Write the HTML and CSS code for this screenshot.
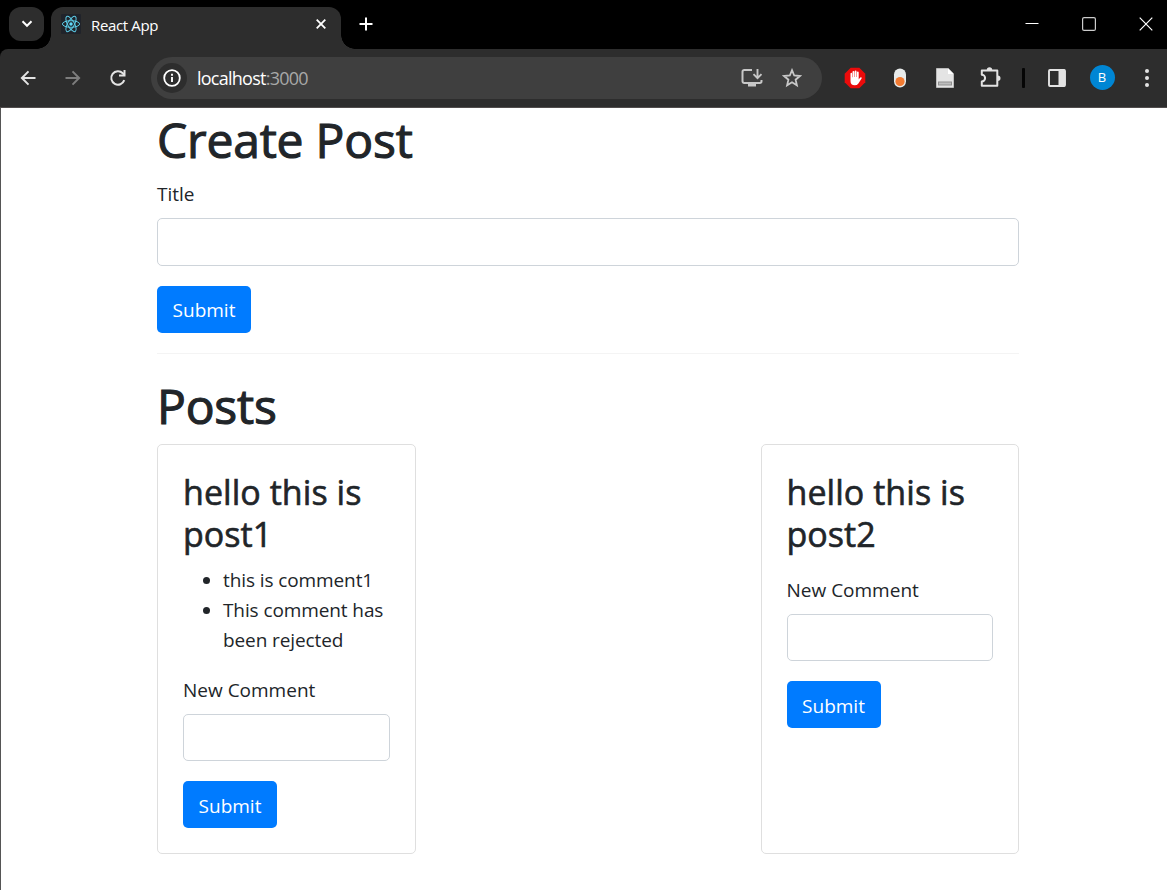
FILE: index.html
```html
<!DOCTYPE html>
<html lang="en">
<head>
<meta charset="utf-8">
<title>React App</title>
<link rel="stylesheet" href="styles.css">
</head>
<body>
<div class="browser">
  <header class="tabstrip">
    <div class="tab-search"><svg width="12" height="12" viewBox="0 0 12 12"><path d="M1.500 3.300 6 7.800l4.500-4.500" fill="none" stroke="#fff" stroke-width="2"/></svg></div>
    <div class="tab">
      <svg class="favicon" width="20" height="20" viewBox="0 0 20 20"><rect width="20" height="20" rx="1" fill="#20232a"/><g fill="none" stroke="#5ccbe6" stroke-width="1"><ellipse cx="10" cy="10" rx="8.600" ry="3.300"/><ellipse cx="10" cy="10" rx="8.600" ry="3.300" transform="rotate(60 10 10)"/><ellipse cx="10" cy="10" rx="8.600" ry="3.300" transform="rotate(120 10 10)"/></g><circle cx="10" cy="10" r="1.700" fill="#61dafb"/></svg>
      <span class="tab-title">React App</span>
      <svg class="tab-close" width="10" height="10" viewBox="0 0 10 10"><path d="m.7.7 8.600 8.600m0-8.600L.7 9.300" stroke="#fff" stroke-width="1.800"/></svg>
    </div>
    <svg class="new-tab" width="14" height="14" viewBox="0 0 14 14"><path d="M7 .5v13M.5 7h13" stroke="#fff" stroke-width="2"/></svg>
    <div class="window-controls">
      <svg width="14" height="14" viewBox="0 0 14 14"><path d="M.5 6.500h13" stroke="#fff"/></svg>
      <svg width="14" height="14" viewBox="0 0 14 14"><rect x=".6" y=".6" width="12.800" height="12.800" rx="1.500" fill="none" stroke="#ccc" stroke-width="1.200"/></svg>
      <svg width="14" height="14" viewBox="0 0 14 14"><path d="m.7.700 12.600 12.600m0-12.600L.7 13.300" stroke="#fff" stroke-width="1.200"/></svg>
    </div>
  </header>
  <nav class="toolbar">
    <div class="cell"><svg width="20" height="20" viewBox="0 0 20 20"><path d="M17.500 10H4m6.500-6.600L3.900 10l6.600 6.600" fill="none" stroke="#e3e3e3" stroke-width="2"/></svg></div>
    <div class="cell"><svg width="20" height="20" viewBox="0 0 20 20"><path d="M2.500 10H16M9.500 3.400 16.100 10l-6.600 6.600" fill="none" stroke="#7d7d7d" stroke-width="2"/></svg></div>
    <div class="cell"><svg width="20" height="20" viewBox="0 0 20 20"><path d="M16.300 12.200A6.700 6.700 0 1 1 14.800 5.300L16.500 7" fill="none" stroke="#e3e3e3" stroke-width="2"/><path d="M17.500 2v6.500H11v-2h4.500V2z" fill="#e3e3e3"/></svg></div>
    <div class="omnibox">
      <div class="site-info"><svg width="18" height="18" viewBox="0 0 18 18"><circle cx="9" cy="9" r="7.800" fill="none" stroke="#fff" stroke-width="1.800"/><path d="M9 8v5M9 4.800v1.900" stroke="#fff" stroke-width="1.900"/></svg></div>
      <span class="url">localhost<span class="port">:3000</span></span>
      <svg class="install" width="22" height="20" viewBox="0 0 22 20"><path d="M11 2H3.200A1.700 1.700 0 0 0 1.500 3.700v9.600A1.700 1.700 0 0 0 3.200 15h15.600a1.700 1.700 0 0 0 1.700-1.700V12" fill="none" stroke="#c7c7c7" stroke-width="2"/><path d="M7 15h8v3.500H7z" fill="#c7c7c7"/><path d="M16.500 1v9m-4-3.800 4 4 4-4" fill="none" stroke="#c7c7c7" stroke-width="1.900"/></svg>
      <svg width="20" height="20" viewBox="0 0 20 20"><path d="m10 2.200 2.200 5.300 5.700.5-4.300 3.700 1.300 5.600L10 14.300l-4.900 3 1.300-5.600L2.100 8l5.700-.5z" fill="none" stroke="#c7c7c7" stroke-width="1.800"/></svg>
    </div>
    <div class="cell"><svg width="22" height="22" viewBox="0 0 22 22"><path d="M6.700.8h8.600l6 6v8.400l-6 6H6.700l-6-6V6.800z" fill="#eb0b0b"/><path d="M6.500 10.500V6.700q0-.9.800-.9t.8.900v3.500h.4V5q0-.9.900-.9t.9.900v5h.4V4.300q0-.9.900-.9t.9.900V10h.4V5.500q0-.9.900-.9t.9.900v7l1.300-1.700q.8-.8 1.600-.2.300.3 0 .8l-3.200 5q-1.300 1.900-3.700 1.900-4.200 0-4.200-4.300z" fill="#fff"/></svg></div>
    <div class="cell"><svg width="14" height="20" viewBox="0 0 14 20"><rect x="1" y=".5" width="12" height="19" rx="6" fill="#e8ebeb"/><circle cx="7" cy="13.500" r="4.600" fill="#f37b32"/></svg></div>
    <div class="cell"><svg width="18" height="20" viewBox="0 0 18 20"><path d="M.5.500h11.700l5.300 5.300v13.700H.5z" fill="#e4e4e4" stroke="#bbb"/><path d="M12 .5v5.500h5.500z" fill="#fff"/><rect x="2.500" y="14" width="13" height="3" fill="#bdbdbd" stroke="#8f8f8f"/></svg></div>
    <div class="cell"><svg width="22" height="22" viewBox="0 0 22 22"><path d="M2.800 3.500H18.300V18.700H2.800v-4.300a3.300 3.300 0 0 0 0-6.600z" fill="none" stroke="#e3e3e3" stroke-width="2" stroke-linejoin="round"/><path d="M7.800 3a2.700 2.700 0 0 1 5.400 0zM18.800 8.500a2.700 2.700 0 0 1 0 5.400z" fill="#e3e3e3"/></svg></div>
    <div class="divider"></div>
    <div class="cell"><svg width="20" height="20" viewBox="0 0 20 20"><rect x="2" y="2" width="16" height="16" rx="1" fill="none" stroke="#e3e3e3" stroke-width="1.900"/><path d="M11.500 1.500H18v17h-6.500z" fill="#e3e3e3"/></svg></div>
    <div class="cell"><span class="avatar">B</span></div>
    <div class="cell"><svg width="4" height="20" viewBox="0 0 4 20"><g fill="#e3e3e3"><circle cx="2" cy="3" r="2"/><circle cx="2" cy="10" r="2"/><circle cx="2" cy="17" r="2"/></g></svg></div>
  </nav>
  <main class="page">
    <div class="container">
      <h1>Create Post</h1>
      <form>
        <div class="form-group"><label>Title</label><input class="form-control"></div>
        <button class="btn" type="button">Submit</button>
      </form>
      <hr>
      <h1>Posts</h1>
      <div class="posts">
        <article class="card">
          <h3>hello this is post1</h3>
          <ul><li>this is comment1</li><li>This comment has been rejected</li></ul>
          <form>
            <div class="form-group"><label>New Comment</label><input class="form-control"></div>
            <button class="btn" type="button">Submit</button>
          </form>
        </article>
        <article class="card">
          <h3>hello this is post2</h3>
          <ul></ul>
          <form>
            <div class="form-group"><label>New Comment</label><input class="form-control"></div>
            <button class="btn" type="button">Submit</button>
          </form>
        </article>
      </div>
    </div>
  </main>
</div>
</body>
</html>
```
FILE: styles.css
```css
* { box-sizing: border-box; }
body { margin: 0; background: #fff; color: #212529; font: 400 19px/30px "Open Sans", "Noto Sans", sans-serif; }
svg { display: block; flex: none; }
.browser { width: 1167px; height: 890px; overflow: hidden; display: flex; flex-direction: column; background: linear-gradient(#000 60px, #fff 60px); }

.tabstrip { height: 49px; flex: none; display: flex; align-items: flex-start; background: #000; padding-left: 9px; }
.tab-search { width: 35px; height: 34px; margin-top: 7px; border-radius: 12px; background: #2d2d2d; display: flex; align-items: center; justify-content: center; }
.tab { position: relative; width: 290px; height: 42px; margin: 7px 0 0 7px; padding: 0 15px 8px 10px; display: flex; align-items: center; background: #2d2d2d; border-radius: 12px 12px 0 0; }
.tab::before, .tab::after { content: ""; position: absolute; bottom: 0; width: 14px; height: 14px; }
.tab::before { left: -14px; background: radial-gradient(circle at 0 0, transparent 13.5px, #2d2d2d 14px); }
.tab::after { right: -14px; background: radial-gradient(circle at 100% 0, transparent 13.5px, #2d2d2d 14px); }
.tab-title { margin-left: 10px; padding-top: 2px; font-size: 15px; line-height: 20px; letter-spacing: -.35px; color: #fff; }
.tab-close { margin-left: auto; }
.new-tab { margin: 17px 0 0 18px; }
.window-controls { margin: 17px 14.500px 0 auto; display: flex; gap: 43px; }

.toolbar { height: 59px; flex: none; display: flex; align-items: center; padding: 0 0 1px 5px; background: #2d2d2d; border-bottom: 1px solid #514d4d; overflow: hidden; border-top-left-radius: 8px; }
.cell { width: 45px; flex: none; display: flex; justify-content: center; }
.omnibox { width: 671px; height: 42px; flex: none; margin: 0 10.500px 0 11px; padding: 0 20px 0 6px; display: flex; align-items: center; border-radius: 21px; background: #3f3f3f; }
.site-info { width: 30px; height: 30px; display: flex; align-items: center; justify-content: center; border-radius: 50%; background: #2d2d2d; }
.url { margin-left: 10px; font-size: 18px; letter-spacing: -.75px; color: #fff; }
.port { color: #a8a8a8; }
.install { margin: 0 19px 0 auto; }
.divider { width: 3px; height: 20px; flex: none; margin: 0 10px 0 9px; border-radius: 1px; background: #050505; }
.avatar { width: 25px; height: 25px; border-radius: 50%; background: #0086d4; color: #fff; font-size: 13px; line-height: 25px; text-align: center; }

.page { flex: 1; border-left: 1px solid #555; background: #fff; }
.container { width: 862px; margin-left: 156px; }
h1, h3 { margin: 0; font-weight: 400; }
h1 { height: 60px; margin-bottom: 10px; padding-top: 4px; font-size: 48px; line-height: 56px; letter-spacing: -.2px; -webkit-text-stroke: 1.1px #212529; }
h3 { padding-top: 1px; margin-bottom: 9px; font-size: 34px; line-height: 42px; letter-spacing: .05px; -webkit-text-stroke: .6px #212529; }
form { display: block; }
.form-group { margin-bottom: 20px; }
label { display: block; padding-top: 1px; margin-bottom: 9px; }
.form-control { display: block; width: 100%; height: 47.5px; padding: 7px 15px; border: 1px solid #ced4da; border-radius: 5px; background: #fff; font: inherit; outline: 0; }
.btn { display: block; width: 94px; height: 47px; padding: 2px 0 0; border: 0; border-radius: 5px; background: #007bff; color: #fff; font: inherit; }
hr { height: 1px; margin: 20px 0; border: 0; background: #f4f4f4; }
.posts { display: flex; justify-content: space-between; }
.card { width: 258.5px; height: 410px; padding: 25px; border: 1px solid #dfdfdf; border-radius: 5px; }
ul { margin: 0 0 19px; padding-left: 40px; letter-spacing: -.1px; }
ul:not(:empty) { padding-top: 1px; }
```
